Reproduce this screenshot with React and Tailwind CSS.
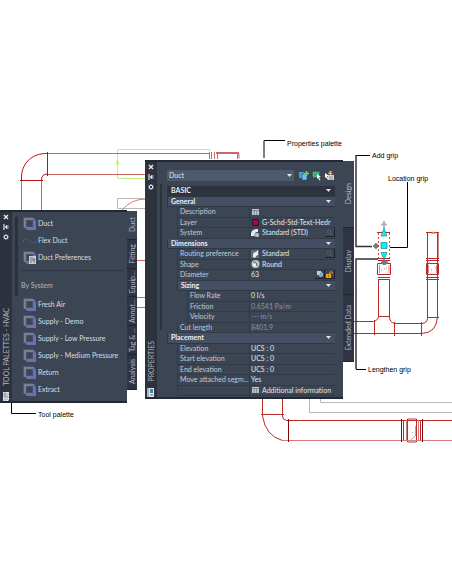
import { useState } from "react";

const systemTools = ["Fresh Air", "Supply - Demo", "Supply - Low Pressure", "Supply - Medium Pressure", "Return", "Extract"];

const toolTabs = [
  { name: "Duct", size: "h-[29px]" },
  { name: "Fitting", size: "h-[29px]" },
  { name: "Equip...", size: "h-[28px]" },
  { name: "Annot...", size: "h-[29px]" },
  { name: "Tag & ...", size: "h-[29px]" },
  { name: "Analysis", size: "h-[35px]" },
];

const propertyTabs = ["Design", "Display", "Extended Data"];

const rows = [
  { type: "root", label: "BASIC" },
  { type: "group", label: "General" },
  { label: "Description", icon: "sheet" },
  { label: "Layer", icon: "swatch", value: "G-Schd-Std-Text-Hedr" },
  { label: "System", icon: "system", value: "Standard (STD)", search: true },
  { type: "group", label: "Dimensions" },
  { label: "Routing preference", icon: "routing", value: "Standard", search: true },
  { label: "Shape", icon: "shape", value: "Round" },
  { label: "Diameter", value: "63", lock: true },
  { type: "subgroup", label: "Sizing" },
  { label: "Flow Rate", value: "0 l/s", nested: true },
  { label: "Friction", value: "0.6541 Pa/m", nested: true, muted: true },
  { label: "Velocity", value: "--- m/s", nested: true, muted: true },
  { label: "Cut length", value: "8401.9", muted: true },
  { type: "group", label: "Placement" },
  { label: "Elevation", value: "UCS : 0" },
  { label: "Start elevation", value: "UCS : 0" },
  { label: "End elevation", value: "UCS : 0" },
  { label: "Move attached segm...", value: "Yes" },
  { label: "", icon: "sheet", value: "Additional information" },
];

function DuctIcon() {
  return (
    <svg width="13" height="13" viewBox="0 0 13 13" className="shrink-0">
      <path d="M0 0h10v11H0z" fill="#4f5770" />
      <path d="M1 1h10l2 3v9H4l-3-3z" fill="#666da8" />
      <path d="M1 1h10l-2 2H3v7L1 11z" fill="#7b7e94" />
      <path d="M4 10h6V4l3 1v8H4z" fill="#6a70b0" />
      <path d="M3 3h7v7H3z" fill="#4b5165" />
      <path d="M4 4h5v5H4z" fill="#3d4555" />
    </svg>
  );
}

function FlexIcon() {
  return (
    <svg width="13" height="13" viewBox="0 0 13 13" fill="none" className="shrink-0">
      <path d="M0 8c2-4 4-4 6-2s4 3 7 1" stroke="#6d6170" strokeWidth="1.5" />
      <path d="M1 7c2-3 3-3 5-1s4 2 6 1" stroke="#35343f" />
    </svg>
  );
}

function PreferenceIcon() {
  return (
    <span className="relative shrink-0">
      <DuctIcon />
      <svg width="7" height="8" viewBox="0 0 7 8" className="absolute right-0 bottom-0">
        <path d="M0 0h7v8H0z" fill="#c9cbd0" />
        <path d="M1 2h3M1 4h3M1 6h2M5 2v5M4 4h2" stroke="#555c68" strokeWidth="0.8" />
      </svg>
    </span>
  );
}

function CloseIcon() {
  return (
    <svg width="6" height="6" viewBox="0 0 6 6">
      <path d="M1 1l4 4M5 1L1 5" stroke="#e8eaee" strokeWidth="1.4" />
    </svg>
  );
}

function PinIcon() {
  return (
    <svg width="6" height="6" viewBox="0 0 6 6">
      <path d="M1 0v6" stroke="#dfe2e7" strokeWidth="1.2" />
      <path d="M2 3l2-2v4zM5 1v4" fill="#dfe2e7" stroke="#dfe2e7" strokeWidth="0.6" />
    </svg>
  );
}

function GearIcon() {
  return (
    <svg width="6" height="6" viewBox="0 0 6 6">
      <circle cx="3" cy="3" r="1.7" fill="none" stroke="#dfe2e7" strokeWidth="1" />
      <path d="M3 0v1.4M3 4.6V6M0 3h1.4M4.6 3H6M.8.8l1 1M4.2 4.2l1 1M5.2.8l-1 1M1.8 4.2l-1 1" stroke="#dfe2e7" strokeWidth="0.8" />
    </svg>
  );
}

function PaletteIcon({ blue }) {
  return (
    <svg width="8" height="9" viewBox="0 0 8 9">
      <path d="M1 0h6v9H1z" fill="#e4e7ea" />
      {blue ? (
        <>
          <path d="M0 0h2v9H0z" fill="#a9b4c1" />
          <path d="M3 1h3v4H3z" fill="#4683b5" />
          <path d="M3 7h3" stroke="#5f7082" />
        </>
      ) : (
        <>
          <path d="M1 2h6M1 4h4M3 0v9" stroke="#7d838d" strokeWidth="0.7" />
          <path d="M5 4l3 3-1.200 0.200L7 9 5 7z" fill="#fff" stroke="#30353f" strokeWidth="0.4" />
        </>
      )}
    </svg>
  );
}

function Arrow() {
  return (
    <svg width="5" height="3" viewBox="0 0 5 3" className="shrink-0">
      <path d="M0 0h5L2.500 3z" fill="#e1e5ea" />
    </svg>
  );
}

function ValueIcon({ name }) {
  return (
    <svg width="9" height="8" viewBox="0 0 9 8" className="mr-[2px] shrink-0">
      {name === "sheet" && (
        <>
          <path d="M1 1h7v6H1z" fill="#c4c8cd" />
          <path d="M1 2.500h7M3.300 3v4M5.700 3v4" stroke="#616977" strokeWidth="0.7" />
        </>
      )}
      {name === "swatch" && <path d="M1.500 1.500h6v6h-6z" fill="#b30048" stroke="#171b25" />}
      {name === "system" && (
        <>
          <path d="M0 7V5q0-4 5-5h2v3H6q-2 0-2 4z" fill="#e8e9ea" />
          <path d="M4 4h4v4H4z" fill="#c6c9cc" stroke="#4e5663" strokeWidth="0.5" />
        </>
      )}
      {name === "routing" && (
        <>
          <path d="M0 0h8v8H0z" fill="#626b77" />
          <path d="M2 7V5q0-3 3-3l2-2v5q-2 0-3 3z" fill="#f1f0e8" />
        </>
      )}
      {name === "shape" && (
        <>
          <circle cx="4.500" cy="4" r="4" fill="#c9cbc9" />
          <path d="M2 2q4-1 4 4" stroke="#565e69" fill="none" />
          <circle cx="3.500" cy="5" r="1.300" fill="#fff" />
        </>
      )}
    </svg>
  );
}

function TitleBar({ title, blue }) {
  return (
    <div className="flex w-[12px] shrink-0 flex-col items-center bg-[#2c323e]">
      <button aria-label="Close" className="flex h-[9px] items-center"><CloseIcon /></button>
      <button aria-label="Auto-hide" className="flex h-[11px] items-center"><PinIcon /></button>
      <button aria-label="Palette settings" className="flex h-[10px] items-center"><GearIcon /></button>
      <h2 className="mt-auto mb-[6px] rotate-180 text-[7px] leading-[9px] whitespace-nowrap text-[#b4b8c0] [writing-mode:vertical-rl]">{title}</h2>
      <PaletteIcon blue={blue} />
    </div>
  );
}

function SideTab({ name, size, active, onClick }) {
  return (
    <button
      role="tab"
      aria-selected={active}
      onClick={onClick}
      className={`flex w-full items-center justify-center overflow-hidden border-b border-[#20252f] ${size} ${active ? "bg-[#3c4554]" : "bg-[#2e3441]"}`}
    >
      <span className="rotate-180 text-[7px] leading-[9px] whitespace-nowrap text-[#b4bac4] [writing-mode:vertical-rl]">{name}</span>
    </button>
  );
}

function Tool({ icon, name }) {
  return (
    <button className="flex h-[17px] w-full items-center gap-[2px] text-left">
      {icon || <DuctIcon />}
      <span>{name}</span>
    </button>
  );
}

function ToolPalette() {
  const [tab, setTab] = useState("Duct");

  return (
    <section className="absolute top-[210px] left-0 flex items-start font-[Lato,sans-serif] text-[7px] text-[#dadee4]">
      <div className="flex h-[193px] w-[127px] border-y-2 border-[#222833] bg-[#3c4554]">
        <TitleBar title="TOOL PALETTES - HVAC" />
        <div className="mt-[4px] ml-[3px] h-[80px] w-[3px] shrink-0 rounded-sm bg-[#2b313d]" />
        <div className="min-w-0 grow pt-[3px] pl-[5px] whitespace-nowrap">
          <Tool name="Duct" />
          <Tool name="Flex Duct" icon={<FlexIcon />} />
          <Tool name="Duct Preferences" icon={<PreferenceIcon />} />
          <h3 className="mt-[4px] mr-[3px] -ml-[2px] flex h-[26px] items-center border-t border-[#2e3542] pt-[4px] text-[#b3b9c3]">By System</h3>
          {systemTools.map((name) => (
            <Tool key={name} name={name} />
          ))}
        </div>
      </div>
      <div role="tablist" className="mt-px w-[10px]">
        {toolTabs.map((t) => (
          <SideTab key={t.name} name={t.name} size={t.size} active={tab === t.name} onClick={() => setTab(t.name)} />
        ))}
      </div>
    </section>
  );
}

function PropertyRow({ row }) {
  if (row.type) {
    const sub = row.type === "subgroup";
    return (
      <tr className="h-[10px]">
        {sub && <td />}
        <th
          colSpan={sub ? 3 : 4}
          className={`border-b border-l border-[#303744] text-left font-bold text-[#eceff4] ${row.type === "root" ? "bg-[#2d333f]" : "bg-[#454f63]"}`}
        >
          <button className="flex w-full items-center justify-between pr-[4px] pl-[3px]">
            {row.label}
            <Arrow />
          </button>
        </th>
      </tr>
    );
  }

  return (
    <tr className={`h-[10px] ${row.muted ? "text-[#8b93a0]" : "text-[#e4e7ec]"}`}>
      <td />
      {row.nested && <td />}
      <th
        colSpan={row.nested ? 1 : 2}
        className="border-b border-l border-[#323a47] pl-[2px] text-left font-normal text-[#c4cad3]"
      >
        {row.label}
      </th>
      <td className="border-b border-l border-[#323a47]">
        <div className="flex h-[9px] items-center pl-[1px]">
          {row.icon && <ValueIcon name={row.icon} />}
          <span>{row.value}</span>
          {row.search && (
            <button aria-label="Browse" className="ml-auto flex h-[9px] w-[10px] items-center justify-center border-r border-b border-[#1c222c]">
              <svg width="7" height="7" viewBox="0 0 7 7" fill="none" stroke="#596273" strokeWidth="0.8">
                <circle cx="3" cy="3" r="2" />
                <path d="M4.500 4.500L7 7" />
              </svg>
            </button>
          )}
          {row.lock && (
            <>
              <button aria-label="Calculate" className="ml-auto flex h-[9px] w-[10px] items-center justify-center border-r border-b border-[#1c222c]">
                <svg width="6" height="6" viewBox="0 0 6 6">
                  <path d="M0 0h4v4H0z" fill="#b9d3e5" />
                  <circle cx="3.800" cy="3.500" r="2" fill="#69a4cd" stroke="#dae9f2" strokeWidth="0.6" />
                </svg>
              </button>
              <button aria-label="Unlock" className="flex h-[9px] w-[10px] items-center justify-center border-r border-b border-[#1c222c]">
                <svg width="7" height="7" viewBox="0 0 7 7">
                  <path d="M0 3h5v4H0z" fill="#f5a31c" />
                  <path d="M3.800 3V1.300q1.200-1.300 2.400 0V3" fill="none" stroke="#e4a23a" strokeWidth="0.9" />
                  <path d="M2.500 4v2" stroke="#875208" strokeWidth="0.8" />
                </svg>
              </button>
            </>
          )}
        </div>
      </td>
    </tr>
  );
}

function PropertiesPalette() {
  const [tab, setTab] = useState("Design");

  return (
    <section className="absolute top-[160px] left-[145px] flex items-start font-[Lato,sans-serif] text-[7px] leading-[9px]">
      <div className="flex h-[239px] w-[198px] border-y-2 border-[#222834] bg-[#3c4554]">
        <TitleBar title="PROPERTIES" blue />
        <div className="mt-[22px] ml-[3px] h-[146px] w-[2px] shrink-0 bg-[#2b313d]" />
        <div className="min-w-0 grow pt-[8px] pr-[8px] pl-[5px] whitespace-nowrap">
          <div className="flex h-[11px] items-center">
            <div className="relative w-[127px]">
              <select aria-label="Object type" className="block h-[11px] w-full appearance-none bg-[#4d5a6d] pl-[2px] text-[7px] leading-[11px] text-[#e2e6eb]">
                <option>Duct</option>
              </select>
              <span className="pointer-events-none absolute top-[4px] right-[2px]"><Arrow /></span>
            </div>
            <div className="flex grow items-center justify-between pr-px pl-[5px]">
              <button aria-label="Toggle pickadd">
                <svg width="10" height="10" viewBox="0 0 10 10">
                  <path d="M0 1h5v6H0z" fill="#4b9bd3" />
                  <path d="M3 3h5v6H3z" fill="#76bde7" stroke="#285579" strokeWidth="0.6" />
                  <path d="M7.500 0v5M5 2.500h5" stroke="#63d47a" strokeWidth="1.500" />
                </svg>
              </button>
              <button aria-label="Select objects">
                <svg width="10" height="10" viewBox="0 0 10 10">
                  <path d="M1 1h6v5H1z" fill="#37ae77" stroke="#77cfa2" strokeWidth="0.8" strokeDasharray="1 1" />
                  <path d="M5 3l4 3-2 .3L8.500 9l-1 .5L6 7 5 8z" fill="#f5f6f7" />
                </svg>
              </button>
              <button aria-label="Quick select">
                <svg width="10" height="10" viewBox="0 0 10 10">
                  <path d="M4 4h6v5H4z" fill="#d8d1c6" />
                  <path d="M5 6h4M5 8h4" stroke="#7c7974" strokeWidth="0.7" />
                  <path d="M1 2l4 3-2 .3L4.500 8l-1 .5L2 6 1 7z" fill="#fff" />
                  <path d="M6 0L4 3h2L5 5l4-3H6.500L8 0z" fill="#ffb951" />
                </svg>
              </button>
            </div>
          </div>
          <table className="mt-[5px] h-[210px] w-full table-fixed border-separate border-spacing-0 [&_td]:py-0 [&_th]:py-0">
            <colgroup>
              <col className="w-[10px]" />
              <col className="w-[10px]" />
              <col className="w-[62px]" />
              <col />
            </colgroup>
            <tbody>
              {rows.map((row, i) => (
                <PropertyRow key={i} row={row} />
              ))}
            </tbody>
          </table>
        </div>
      </div>
      <div role="tablist" className="mt-px w-[11px]">
        {propertyTabs.map((name) => (
          <SideTab key={name} name={name} size="h-[67px]" active={tab === name} onClick={() => setTab(name)} />
        ))}
      </div>
    </section>
  );
}

function DuctDrawing() {
  return (
    <svg width="452" height="584" viewBox="0 0 452 584" fill="none" className="absolute top-0 left-0">
      <g stroke="#b8b8b8">
        <path d="M146 198.500h-28.500v10H146" />
        <path d="M309.500 396v16.500H452M320.500 396v6.500H452" />
      </g>
      <path d="M209.500 155v-5.500h-92v29H146M117.500 160l-1.500 4h3z" stroke="#bdf582" fill="none" />

      {/* supply run, upper left */}
      <g stroke="#cf6666">
        <path d="M21.500 180v32M41.500 180v32M47 153.500h162M47 174.500h99" />
        <path d="M137 260.500h9M137 297.500h9M137 307.500h9" />
        <path d="M209.500 152v7M211.500 152v7M214.500 152v7M217.500 152v7M216 153.500h23v5" />
        <path d="M216 152.500h23M237.500 153v6" />
      </g>
      <path d="M122 210q9-11 24-11" stroke="#f26e70" />
      <g stroke="#b01717">
        <path d="M21.500 180c-1-17 11-27 26-26.500M41.500 180q0-6 6-6M20 180.500h23M47.500 152v24" />
      </g>

      {/* return run, lower right */}
      <g stroke="#bd2a2a">
        <path d="M262.500 396v20q3 20 20 24.500M282.500 396v20q0 4 4 4.500H452M261 414.500h23" />
        <path d="M403.500 420v21M420.500 420v21M407.500 419h9v23h-9z" />
      </g>
      <path d="M282 440.500h170M406.500 420v21M418.500 420v21" stroke="#d77b7b" />
      <path d="M288.500 419v23M401.500 419v23M422.500 419v23" stroke="#920000" />
      <path d="M415.500 426v10l-5 4M412.500 432v1M410 441h6" stroke="#aaa" />

      {/* vertical drops and the connecting tee */}
      <g stroke="#bc2828">
        <path d="M378.500 233v25M389.500 233v25" strokeDasharray="2 2" stroke="#c94a4a" />
        <path d="M377 232.500h13" />
        <path d="M378.500 279v37q0 4-5 5.500H354M389.500 279v38q0 5 5 6.500h27q6 0 6-6V232M437.500 232v85q-1 16-16 16.500H354" />
        <path d="M378 316.500h12M374.500 320v15M394.500 322v14M421.500 322v14M427 317.500h12M426 232.500h13" />
        <path d="M378 258.500h12M378 260.500h12M426 258.500h13M426 260.500h13M378 277.500h12M378 279.500h12M426 277.500h13M426 279.500h13" />
        <path d="M377.500 263.500h13v11h-13zM426.500 263.500h12v11h-12z" />
        <path d="M379.500 265v8M389 265v8M428.500 265v8M436.500 265v8" stroke="#dc8585" />
      </g>
      <path d="M438.500 233v25" stroke="#d58c8c" />
      <path d="M381 270h1M384 269h1M386 268h1M431 270h1M435 268h1" stroke="#888" />
      <path d="M431 234l2.500-3 2 3z" fill="#e9a03a" />

      {/* grips */}
      <path d="M384 221v7M381 224.500h6" stroke="#b2b2b2" strokeWidth="2" />
      <path d="M384 228l3 8h-6zM381 242.500h6v6h-6zM381 252.500h6l-3 7z" fill="#00f6ff" stroke="#378084" strokeWidth="0.7" />
      <path d="M381 262.500h7M384 259v6" stroke="#858585" strokeWidth="2" />
      <circle cx="384.500" cy="262.500" r="2.500" fill="#777" />
      <circle cx="376" cy="246" r="2" stroke="#666" />
      <path d="M376 243v6M373 246h6" stroke="#555" />

      {/* callout leaders */}
      <path d="M264 158v-17.500h21M11.500 403v10.500H36M407.500 182v65.500H390" stroke="#000" />
      <path d="M370 155.500h-14" stroke="#000" />
      <path d="M356 155v91.500h16M378 259h-22v110" stroke="#333" strokeWidth="1.500" />
      <path d="M356 369.500h10" stroke="#000" />
    </svg>
  );
}

export default function App() {
  return (
    <main className="relative min-h-screen w-full overflow-hidden bg-white font-['Liberation_Sans',sans-serif] text-[7px] leading-[9px] text-black">
      <DuctDrawing />
      <span className="absolute top-[139px] left-[287px]">Properties palette</span>
      <span className="absolute top-[151px] left-[372px]">Add grip</span>
      <span className="absolute top-[174px] left-[388px]">Location grip</span>
      <span className="absolute top-[365px] left-[368px]">Lengthen grip</span>
      <span className="absolute top-[410px] left-[38px]">Tool palette</span>
      <ToolPalette />
      <PropertiesPalette />
    </main>
  );
}
